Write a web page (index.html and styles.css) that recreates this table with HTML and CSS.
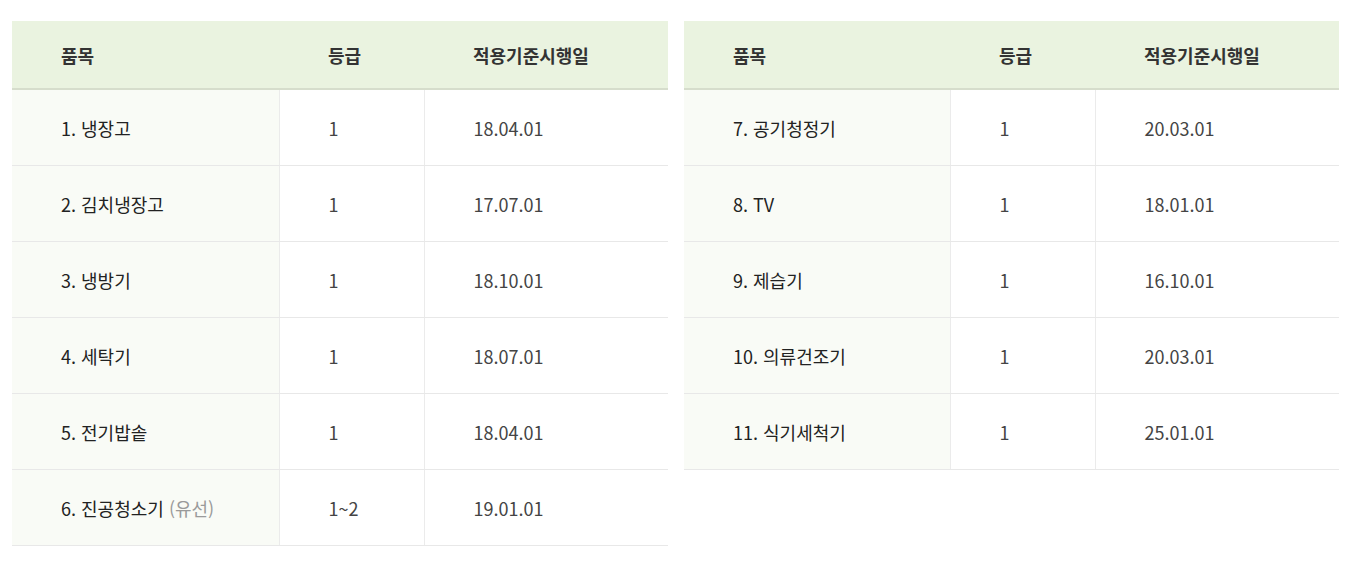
FILE: index.html
```html
<!DOCTYPE html>
<html lang="ko">
<head>
<meta charset="utf-8">
<link rel="stylesheet" href="styles.css">
</head>
<body>
<div class="wrap">
  <table class="tbl tbl-left">
    <colgroup><col class="c1"><col class="c2"><col class="c3"></colgroup>
    <thead><tr><th>품목</th><th>등급</th><th>적용기준시행일</th></tr></thead>
    <tbody>
      <tr><td class="name">1. 냉장고</td><td>1</td><td>18.04.01</td></tr>
      <tr><td class="name">2. 김치냉장고</td><td>1</td><td>17.07.01</td></tr>
      <tr><td class="name">3. 냉방기</td><td>1</td><td>18.10.01</td></tr>
      <tr><td class="name">4. 세탁기</td><td>1</td><td>18.07.01</td></tr>
      <tr><td class="name">5. 전기밥솥</td><td>1</td><td>18.04.01</td></tr>
      <tr><td class="name">6. 진공청소기 <span class="sub">(유선)</span></td><td>1~2</td><td>19.01.01</td></tr>
    </tbody>
  </table>
  <table class="tbl tbl-right">
    <colgroup><col class="c1"><col class="c2"><col class="c3"></colgroup>
    <thead><tr><th>품목</th><th>등급</th><th>적용기준시행일</th></tr></thead>
    <tbody>
      <tr><td class="name">7. 공기청정기</td><td>1</td><td>20.03.01</td></tr>
      <tr><td class="name">8. TV</td><td>1</td><td>18.01.01</td></tr>
      <tr><td class="name">9. 제습기</td><td>1</td><td>16.10.01</td></tr>
      <tr><td class="name">10. 의류건조기</td><td>1</td><td>20.03.01</td></tr>
      <tr><td class="name">11. 식기세척기</td><td>1</td><td>25.01.01</td></tr>
    </tbody>
  </table>
</div>
</body>
</html>
```

FILE: styles.css
```css
html, body {
  margin: 0;
  padding: 0;
  background: #ffffff;
}
body {
  font-family: "Noto Sans CJK KR", "Noto Sans", sans-serif;
  color: #333333;
}
.wrap {
  display: flex;
  align-items: flex-start;
  gap: 16px;
  padding: 21px 11px 0 12px;
}
.tbl {
  border-collapse: collapse;
  table-layout: fixed;
}
.tbl-left { width: 656px; }
.tbl-right { width: 655px; }
.c1 { width: 267px; }
.tbl-right .c1 { width: 266px; }
.c2 { width: 145px; }
.tbl th {
  height: 67px;
  padding: 0 0 0 49px;
  text-align: left;
  background: #eaf3e0;
  border-bottom: 2px solid #d6ddcc;
  font-size: 18px;
  font-weight: 700;
  color: #333333;
  line-height: 1;
}
.tbl td {
  height: 75px;
  padding: 0 0 0 49px;
  text-align: left;
  font-size: 18px;
  font-weight: 400;
  color: #444444;
  border-bottom: 1px solid #e8e8e8;
  border-left: 1px solid #ebebeb;
  line-height: 1;
}
.tbl td.name {
  background: #f9fbf6;
  border-left: none;
  color: #222222;
}
.sub {
  color: #9a9a9a;
}
```
